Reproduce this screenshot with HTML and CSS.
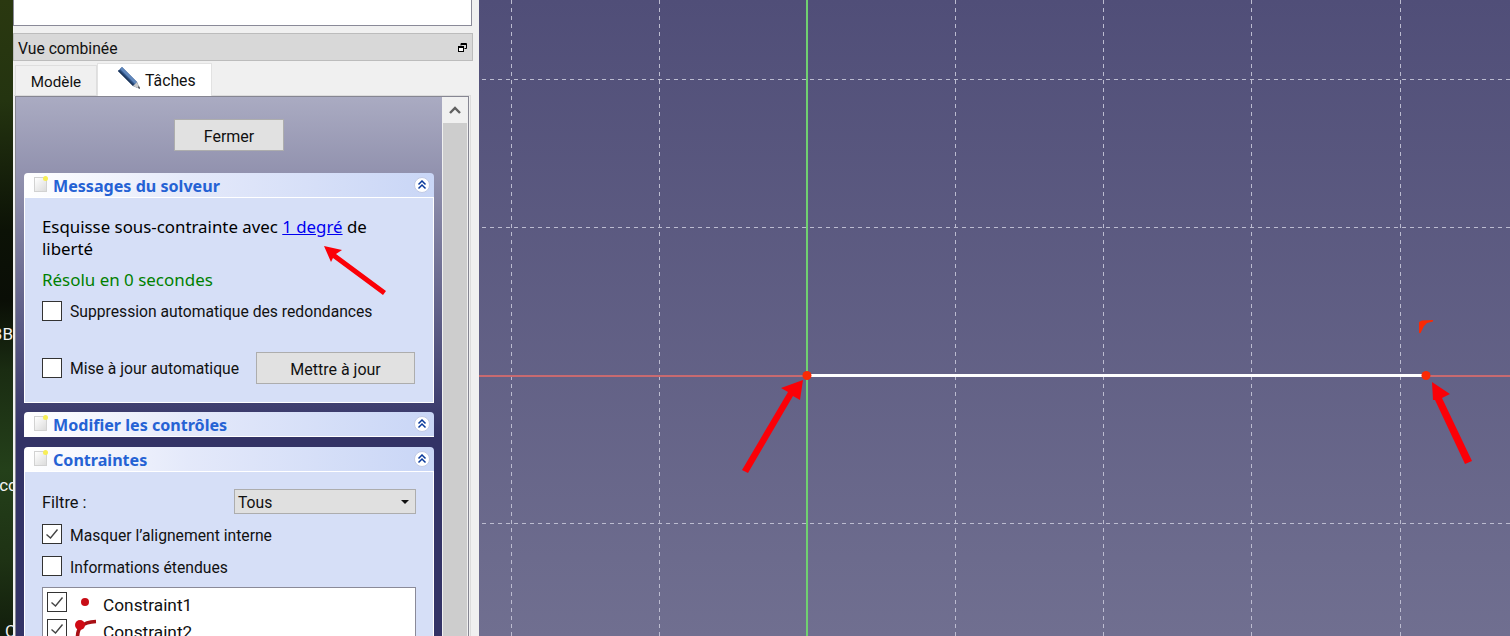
FILE: index.html
```html
<!DOCTYPE html>
<html lang="fr">
<head>
<meta charset="utf-8">
<title>Esquisse</title>
<link rel="stylesheet" href="styles.css">
</head>
<body>
<div class="app">
  <div class="desktop">
    <span class="desk-label l1">3B</span>
    <span class="desk-label l2">cc</span>
    <span class="desk-label l3">C</span>
  </div>
  <aside class="panel">
    <div class="topbox"></div>
    <div class="dock-title">
      <span class="shift">Vue combinée</span>
      <svg class="float-icon" width="9" height="9" viewBox="0 0 9 9"><path d="M3 .5h5.5v5H6.5M3 .5v2M3 1.5h5.5" fill="none" stroke="#000"/><rect x=".5" y="3.5" width="5" height="5" fill="#fff" stroke="#000"/><path d="M.5 4.5h5" stroke="#000"/></svg>
    </div>
    <div class="tabs">
      <div class="tab"><span class="shift tab-text">Modèle</span></div>
      <div class="tab active">
        <svg class="pencil" width="24" height="24" viewBox="0 0 24 24">
          <polygon points="5,1 1,5 16,20 23,23 20,16" fill="#2d5184"/>
          <polygon points="3,3 18,18 20,16 5,1" fill="#5f86bb"/>
          <polygon points="1,5 16,20 17,19 2,4" fill="#1c3558"/>
          <polygon points="16,20 23,23 20,16" fill="#c9c9c9"/>
          <polygon points="21,21.3 23,23 22,20" fill="#222"/>
        </svg>
        <span class="shift tab-active-text">Tâches</span>
      </div>
    </div>
    <div class="frame">
      <div class="scroll-view">
        <div class="scroll-content">
          <div class="close-row"><button class="btn close-btn">Fermer</button></div>

          <section class="box">
            <header class="box-head">
              <span class="note"></span><h2>Messages du solveur</h2>
              <span class="collapse"><svg width="10" height="10" viewBox="0 0 10 10"><path d="M1.5 4.5 5 1l3.5 3.5M1.5 8.5 5 5l3.5 3.5" fill="none" stroke="#0a3a9c" stroke-width="1.5"/></svg></span>
            </header>
            <div class="box-body solver">
              <p class="msg">Esquisse sous-contrainte avec <a href="#">1 degré</a> de liberté</p>
              <p class="ok">Résolu en 0 secondes</p>
              <label class="check first"><span class="cb"></span>Suppression automatique des redondances</label>
              <div class="update-row">
                <label class="check"><span class="cb"></span>Mise à jour automatique</label>
                <button class="btn update-btn">Mettre à jour</button>
              </div>
            </div>
          </section>

          <section class="box">
            <header class="box-head">
              <span class="note"></span><h2>Modifier les contrôles</h2>
              <span class="collapse"><svg width="10" height="10" viewBox="0 0 10 10"><path d="M1.5 4.5 5 1l3.5 3.5M1.5 8.5 5 5l3.5 3.5" fill="none" stroke="#0a3a9c" stroke-width="1.5"/></svg></span>
            </header>
          </section>

          <section class="box">
            <header class="box-head">
              <span class="note"></span><h2>Contraintes</h2>
              <span class="collapse"><svg width="10" height="10" viewBox="0 0 10 10"><path d="M1.5 4.5 5 1l3.5 3.5M1.5 8.5 5 5l3.5 3.5" fill="none" stroke="#0a3a9c" stroke-width="1.5"/></svg></span>
            </header>
            <div class="box-body constraints">
              <div class="filter-row">
                <span class="shift filter-label">Filtre :</span>
                <div class="combo"><span class="shift">Tous</span><i class="combo-arrow"></i></div>
              </div>
              <label class="check"><span class="cb"><svg width="18" height="18" viewBox="0 0 18 18"><path d="M3.5 9.5 7.5 13 14.5 4.5" fill="none" stroke="#444" stroke-width="1.4"/></svg></span><span class="shift">Masquer l’alignement interne</span></label>
              <label class="check second"><span class="cb"></span><span class="shift">Informations étendues</span></label>
              <div class="list">
                <div class="item">
                  <span class="cb"><svg width="18" height="18" viewBox="0 0 18 18"><path d="M3.5 9.5 7.5 13 14.5 4.5" fill="none" stroke="#444" stroke-width="1.4"/></svg></span>
                  <svg class="item-icon" width="24" height="24" viewBox="0 0 24 24"><circle cx="11" cy="10" r="4" fill="#c80d16"/></svg>
                  <span class="item-text">Constraint1</span>
                </div>
                <div class="item">
                  <span class="cb"><svg width="18" height="18" viewBox="0 0 18 18"><path d="M3.5 9.5 7.5 13 14.5 4.5" fill="none" stroke="#444" stroke-width="1.4"/></svg></span>
                  <svg class="item-icon" width="24" height="24" viewBox="0 0 24 24"><path d="M3.5 20C3 9 8 3 22 2.5" fill="none" stroke="#a80f14" stroke-width="3.6"/><circle cx="6" cy="6" r="5" fill="#d00a14"/></svg>
                  <span class="item-text">Constraint2</span>
                </div>
              </div>
            </div>
          </section>
        </div>
        <div class="scrollbar">
          <div class="scroll-up"><svg width="12" height="8" viewBox="0 0 12 8"><path d="M1 7 6 2l5 5" fill="none" stroke="#606060" stroke-width="2.4"/></svg></div>
        </div>
      </div>
    </div>
    <svg class="callout" width="70" height="56" viewBox="0 0 70 56">
      <polygon points="1,1 19,5 13,9 63,46 60,50 10,13 8,17" fill="#fb0007"/>
    </svg>
  </aside>
  <main class="viewport">
    <svg class="scene" width="1031" height="636" viewBox="0 0 1031 636">
      <g class="grid">
        <path d="M32.5 0V636M180.5 0V636M476.5 0V636M624.5 0V636M772.5 0V636M921.5 0V636"/>
        <path d="M-5 79.5H1031M-5 227.5H1031M-5 523.5H1031"/>
      </g>
      <path d="M0 376H1031" stroke="#c86a70" stroke-width="2"/>
      <path d="M328 0V636" stroke="#70d070" stroke-width="2"/>
      <path d="M328 375.5H947" stroke="#fff" stroke-width="3"/>
      <circle cx="328" cy="375.5" r="4.5" fill="#fa2a05"/>
      <circle cx="947" cy="375.5" r="4.5" fill="#fa2a05"/>
      <path d="M940 322L943 320.5 954 320V321.5L948 323 945 326 941.5 333H940Z" fill="#fa2a05"/>
      <polygon points="324,380 321,400 314,396 269,473 263,470 309,392 302,388" fill="#fb0007"/>
      <polygon points="953,382 971,394 963,398 993,461 986,464 956,400 954,400" fill="#fb0007"/>
    </svg>
  </main>
</div>
</body>
</html>
```
FILE: styles.css
```css
* { box-sizing: border-box; }
html, body { margin: 0; height: 636px; overflow: hidden; }
body { font-family: Roboto, "Noto Sans", sans-serif; font-size: 15.7px; color: #111; background: #000; }
h2, p { margin: 0; }
button { font: inherit; font-size: 16px; color: inherit; }

.shift { padding-top: 2px; }
.tab-text { font-size: 15.2px; }
.tab-active-text { font-size: 15.8px; margin-left: 1px; }
.filter-label { font-size: 16.4px; }

.app { display: grid; grid-template-columns: 13px 466px 1031px; width: 1510px; height: 636px; overflow: hidden; }

.desktop {
  position: relative;
  overflow: hidden;
  background: linear-gradient(#2a3810 0, #243410 100px, #0c1206 230px, #0a0e06 300px, #1a2c12 370px, #24401a 470px, #1e3214 560px, #121e0c 636px);
}
.desk-label { position: absolute; right: 0; color: #f2f2f2; font-size: 17px; line-height: 20px; white-space: nowrap; }
.l1 { top: 324px; }
.l2 { top: 475px; right: -4px; }
.l3 { top: 621px; right: -3px; }

.panel { position: relative; background: #f0f0f0; display: flex; flex-direction: column; height: 636px; overflow: hidden; }
.topbox { height: 26px; width: 459px; background: #fff; border: 1px solid #8a8a98; border-top: 0; }
.dock-title {
  margin-top: 7px; width: 460px; height: 28px; padding: 0 5px 0 4px;
  display: flex; align-items: center; justify-content: space-between;
  background: #d8d8d8; border: 1px solid #bcbcbc; color: #111;
}
.float-icon { flex: none; }

.tabs { display: flex; align-items: flex-end; height: 34px; padding-left: 2px; position: relative; z-index: 1; }
.tab { height: 30px; width: 82px; display: flex; align-items: center; justify-content: center; background: #f0f0f0; border: 1px solid #dedede; border-bottom: 0; }
.tab.active { height: 33px; width: 115px; margin-bottom: -1px; background: #fff; gap: 3px; justify-content: flex-start; padding: 0 0 2px 19px; border-color: #e2e2e2; }
.pencil { flex: none; margin-top: -2px; }

.frame { margin-left: 1px; width: 457px; flex: 1; min-height: 0; border: 1px solid #dcdcdc; border-width: 1px 1px 0 0; padding-right: 1px; overflow: hidden; }
.scroll-view { height: 100%; margin-left: 1px; display: flex; border: 1px solid #868692; border-bottom: 0; width: 454px; }
.scroll-content {
  width: 426px; flex: none; height: 539px; padding: 0 8px; overflow: hidden;
  background: linear-gradient(#aaabc2 0, #8a8aa8 100px, #333366 340px);
}
.scrollbar { flex: none; width: 26px; background: #cdcdcd; border-left: 1px solid #f0f0f0; border-right: 1px solid #f0f0f0; }
.scroll-up { height: 26px; background: #f0f0f0; display: flex; align-items: center; justify-content: center; }

.close-row { display: flex; justify-content: center; padding: 22px 0; }
.btn { background: #e1e1e1; border: 1px solid #adadad; padding: 2px 0 0; }
.close-btn { width: 110px; height: 32px; }

.box { width: 410px; margin-bottom: 9px; }
.box + .box + .box { margin-top: 10px; }
.box-head {
  height: 25px; padding: 0 4px 1px 10px; display: flex; align-items: center;
  border-radius: 4px 4px 0 0;
  background: linear-gradient(90deg, #fff 0, #e4e9fa 40%, #c9d6f6 100%);
  border-bottom: 1px solid #fff;
}
.note {
  position: relative; flex: none; width: 13px; height: 15px; margin-right: 6px;
  background: linear-gradient(135deg, #fff, #dcdcdc); border: 1px solid #d2d2d2;
}
.note::after { content: ""; position: absolute; right: -2px; top: -2px; width: 5px; height: 5px; border-radius: 50%; background: #f7ee56; }
.box-head h2 { flex: 1; padding-top: 2px; font-family: "Noto Sans", sans-serif; font-size: 16.1px; line-height: 20px; font-weight: 700; color: #2562d4; }
.collapse {
  flex: none; width: 16px; height: 16px; border-radius: 50%; background: #fff;
  border: 1px solid #c2cbe6; display: flex; align-items: center; justify-content: center;
}
.box-body { background: #d6dff7; border: 1px solid #fff; border-top: 0; padding: 0 17px; }
.solver { height: 205px; padding-top: 18px; }
.msg { font-family: "Noto Sans", sans-serif; font-size: 16.85px; line-height: 22px; color: #000; }
.msg a { color: #0000f0; }
.ok { font-family: "Noto Sans", sans-serif; font-size: 16.95px; margin-top: 10px; color: #008000; line-height: 20px; }

.check { display: flex; align-items: center; gap: 8px; height: 20px; white-space: nowrap; }
.first { margin-top: 11px; }
.cb { flex: none; width: 20px; height: 20px; background: #fff; border: 1px solid #333; display: flex; align-items: center; justify-content: center; }
.update-row { display: flex; align-items: center; justify-content: space-between; margin-top: 31px; width: 373px; }
.update-btn { width: 159px; height: 32px; }

.constraints { height: 220px; padding-top: 17px; }
.filter-row { display: flex; align-items: center; justify-content: space-between; height: 25px; margin-bottom: 10px; }
.combo { width: 182px; height: 25px; padding: 0 6px 0 3px; display: flex; align-items: center; justify-content: space-between; background: #e0e0e0; border: 1px solid #adadad; }
.combo-arrow { width: 0; height: 0; border: 4px solid transparent; border-top: 4px solid #111; border-bottom: 0; }
.second { margin-top: 12px; }
.list { margin-top: 11px; width: 374px; height: 80px; background: #fff; border: 1px solid #8a8a98; padding: 4px; }
.item { display: flex; align-items: flex-start; height: 27px; }
.item .cb { width: 20px; height: 20px; }
.item-icon { flex: none; margin-left: 7px; }
.item-text { margin-left: 5px; padding-top: 1px; font-size: 17.3px; line-height: 24px; }
.scene { display: block; overflow: visible; }
.viewport { background: linear-gradient(#504e78, #706f90); overflow: hidden; }
.grid path { fill: none; stroke: #bcbcd0; stroke-width: 1; stroke-dasharray: 4 4; }

.callout { position: absolute; left: 310px; top: 245px; }
```
